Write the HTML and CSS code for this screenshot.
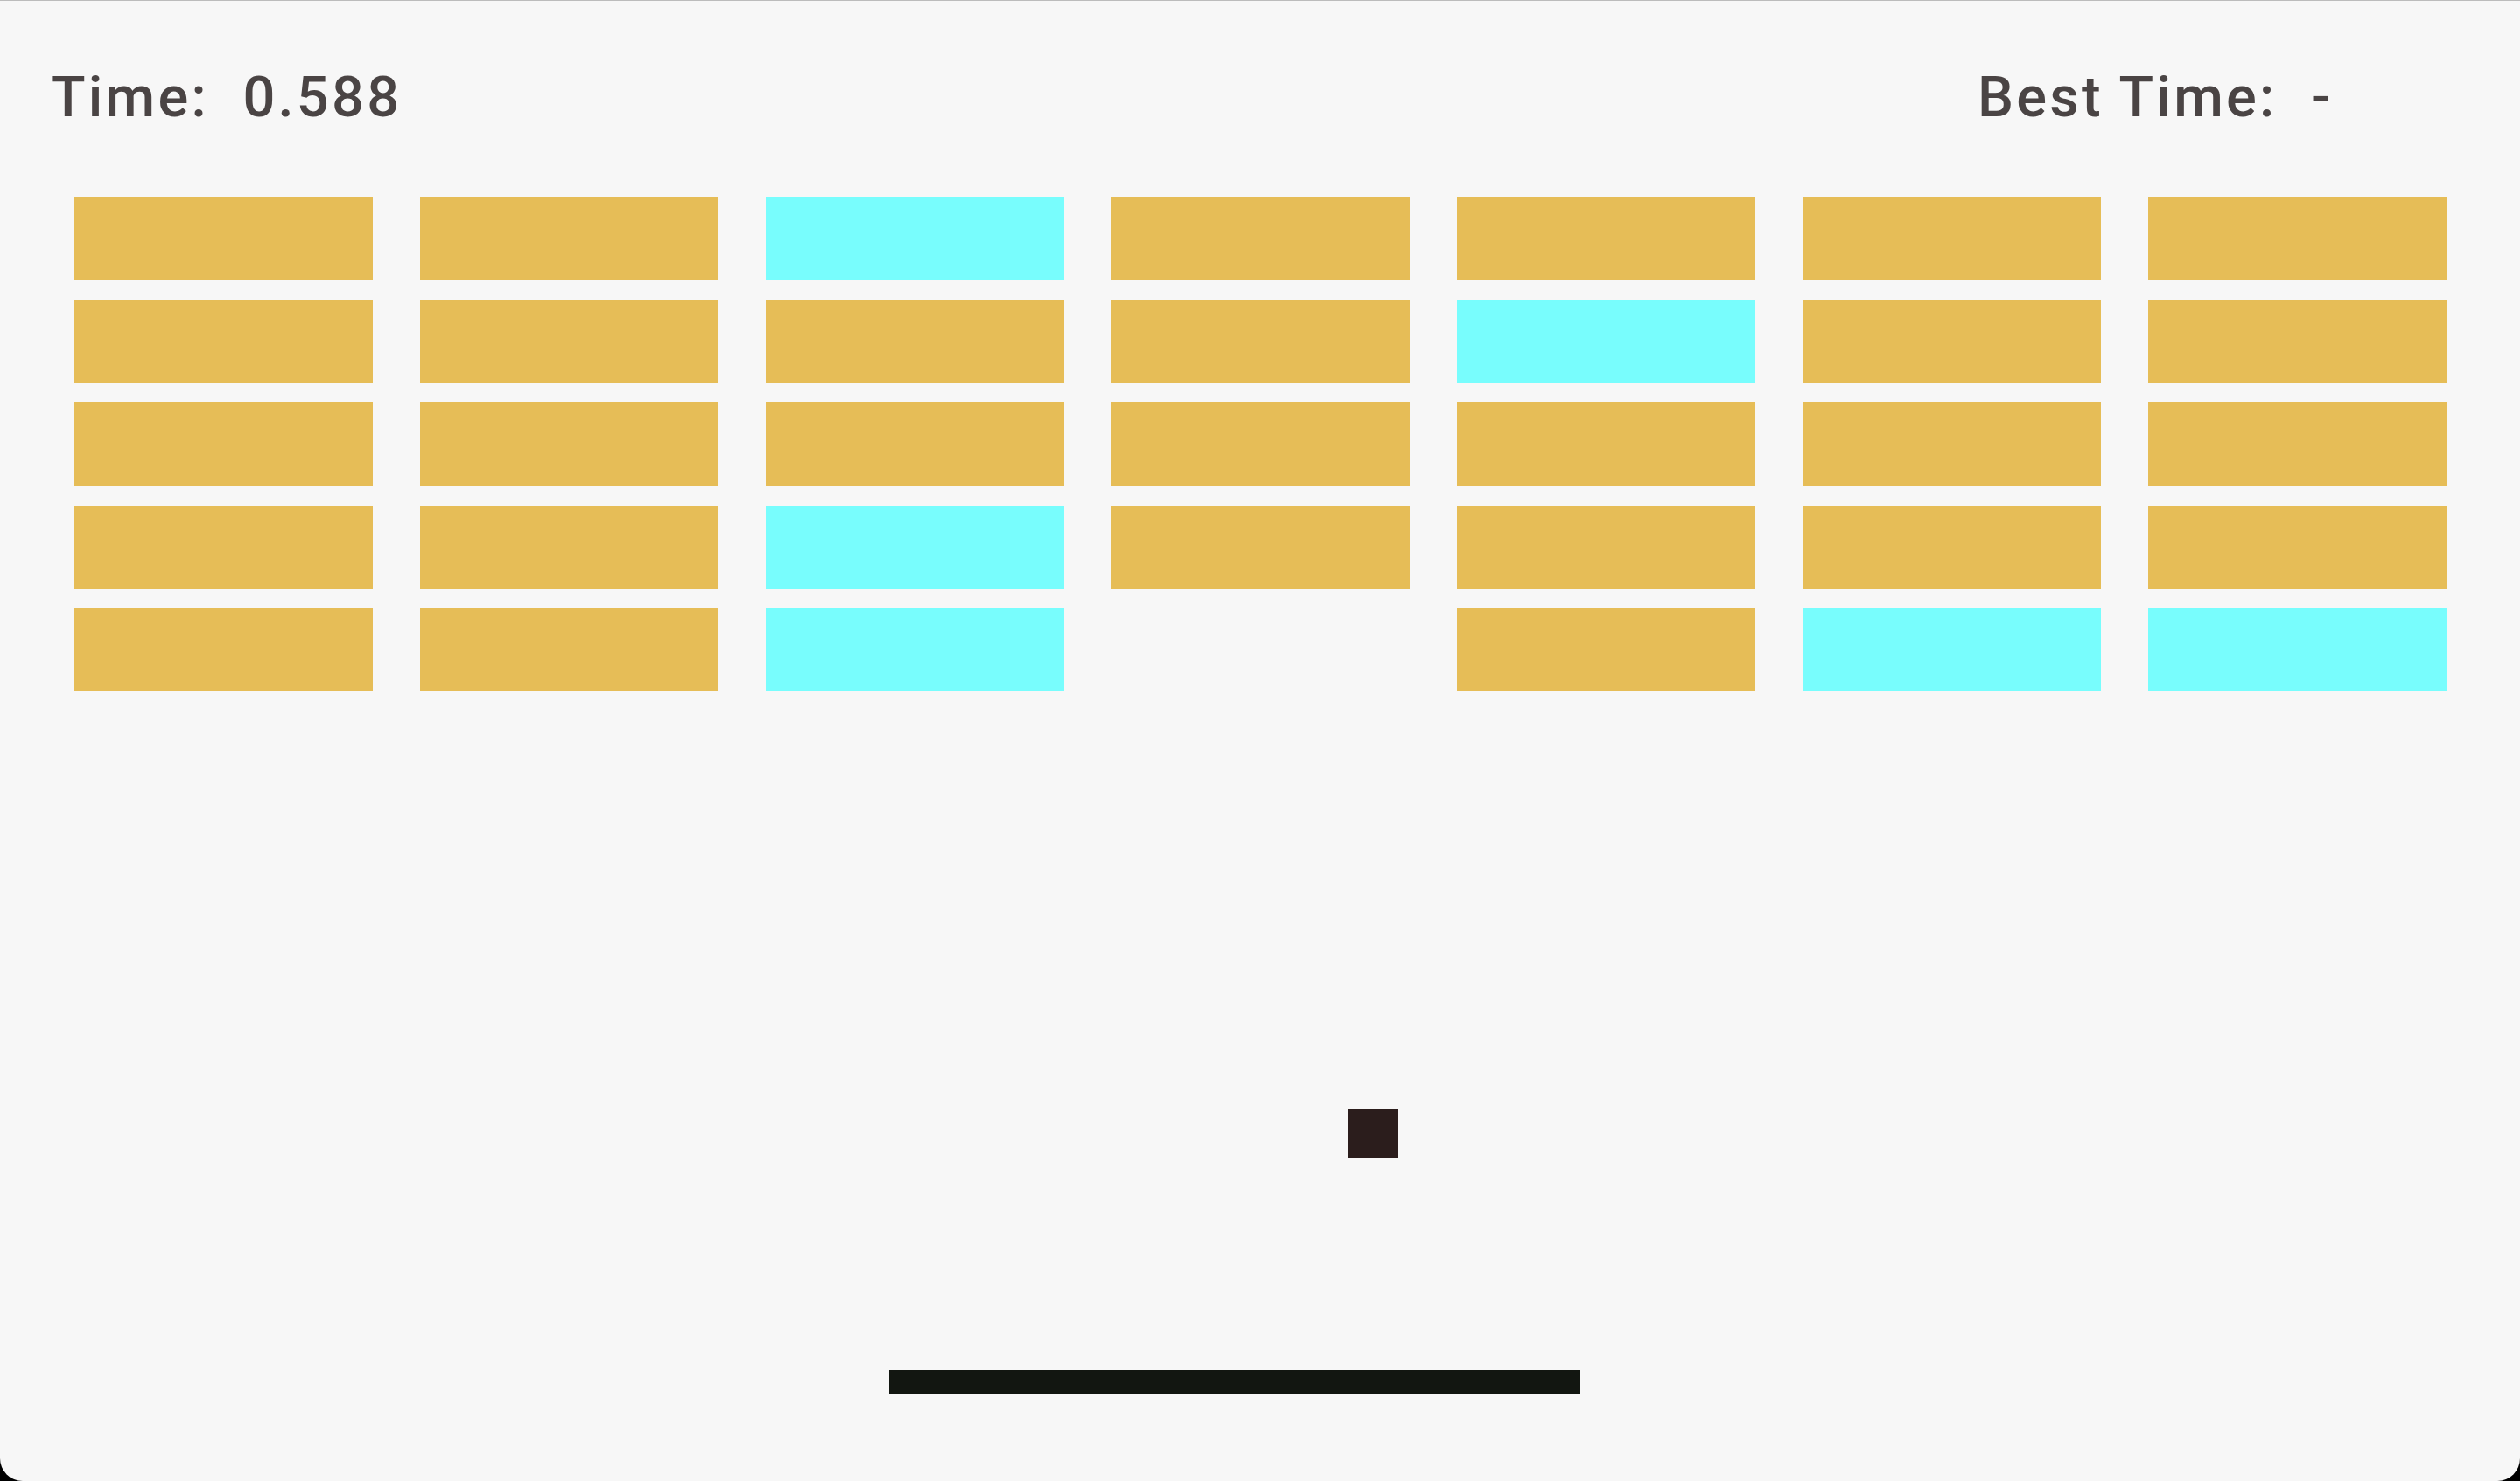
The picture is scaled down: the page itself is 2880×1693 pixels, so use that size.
FILE: index.html
```html
<!DOCTYPE html>
<html lang="en">
<head>
    <meta charset="UTF-8">
    <title>Breakout</title>
    <link rel="stylesheet" href="styles.css">
</head>
<body>
    <div class="game">
        <header class="hud">
            <div class="timer">Time:  0.588</div>
            <div class="timer best">Best Time:  -</div>
        </header>

        <div class="bricks">
            <div class="brick"></div>
            <div class="brick"></div>
            <div class="brick hit"></div>
            <div class="brick"></div>
            <div class="brick"></div>
            <div class="brick"></div>
            <div class="brick"></div>

            <div class="brick"></div>
            <div class="brick"></div>
            <div class="brick"></div>
            <div class="brick"></div>
            <div class="brick hit"></div>
            <div class="brick"></div>
            <div class="brick"></div>

            <div class="brick"></div>
            <div class="brick"></div>
            <div class="brick"></div>
            <div class="brick"></div>
            <div class="brick"></div>
            <div class="brick"></div>
            <div class="brick"></div>

            <div class="brick"></div>
            <div class="brick"></div>
            <div class="brick hit"></div>
            <div class="brick"></div>
            <div class="brick"></div>
            <div class="brick"></div>
            <div class="brick"></div>

            <div class="brick"></div>
            <div class="brick"></div>
            <div class="brick hit"></div>
            <div class="brick gone"></div>
            <div class="brick"></div>
            <div class="brick hit"></div>
            <div class="brick hit"></div>
        </div>

        <!-- moving pieces sit on the playfield -->
        <div class="ball"></div>
        <div class="paddle"></div>
    </div>
</body>
</html>
```

FILE: styles.css
```css
* {
    margin: 0;
    padding: 0;
    box-sizing: border-box;
}

html {
    background-color: #000;
}

body {
    font-family: Roboto, 'Liberation Sans', sans-serif;
    color: #4a4444;
}

.game {
    position: relative;
    width: 2880px;
    height: 1693px;
    background-color: #f7f7f7;
    border-top: 1px solid #bcbcbc;
    border-radius: 0 0 26px 26px;
    overflow: hidden;
}

.hud {
    display: flex;
    justify-content: space-between;
    padding: 72px 50px 0 58px;
}

.timer {
    font-size: 65px;
    font-weight: 500;
    line-height: 76px;
    white-space: pre;
    letter-spacing: 3.2px;
}

.timer.best {
    width: 570px;
}

.bricks {
    display: grid;
    grid-template-columns: repeat(7, 341px);
    grid-auto-rows: 95px;
    column-gap: 54px;
    row-gap: 22.5px;
    margin-top: 76px;
    padding-left: 85px;
}

.brick {
    background-color: #e6bd57;
}

.brick.hit {
    background-color: #78fdfd;
}

.brick.gone {
    visibility: hidden;
}

.ball {
    position: absolute;
    left: 1541px;
    top: 1267px;
    width: 57px;
    height: 56px;
    background-color: #2b1d1c;
}

.paddle {
    position: absolute;
    left: 1016px;
    top: 1565px;
    width: 790px;
    height: 28px;
    background-color: #121611;
}
```
